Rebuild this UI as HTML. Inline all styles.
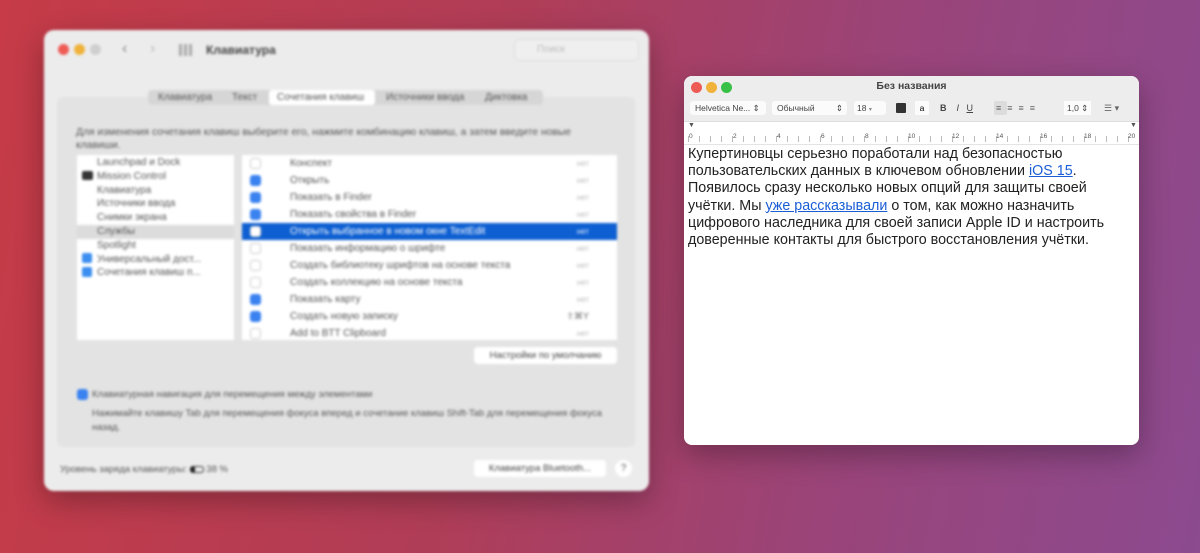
<!DOCTYPE html><html><head><meta charset="utf-8"><style>
*{margin:0;padding:0;box-sizing:border-box}
body{width:1200px;height:553px;overflow:hidden;position:relative;font-family:"Liberation Sans",sans-serif;background:linear-gradient(100deg,#c63b47 0%,#b03d57 40%,#9a4479 70%,#8c4a8f 100%)}
.a{position:absolute}
#L{left:44px;top:30px;width:605px;height:461px;background:#ececec;border-radius:10px;filter:blur(1.2px);box-shadow:0 10px 30px rgba(0,0,0,.3);color:#333;font-size:10px}
.dot{width:11px;height:11px;border-radius:50%;position:absolute}
.row{position:absolute;left:0;right:0;height:17px;font-size:10px;line-height:17px;color:#555}
.cb{position:absolute;left:8px;top:3px;width:11px;height:11px;border-radius:3px;border:1px solid #ccc;background:#fff}
.cb.on{background:#3a82f0;border-color:#3a82f0}
.net{position:absolute;right:28px;color:#bbb;font-size:8px}
#R{left:684px;top:76px;width:455px;height:369px;background:#fff;border-radius:8px;box-shadow:0 10px 30px rgba(0,0,0,.3);overflow:hidden}
a{color:#1a5ed6;text-decoration:underline}
</style></head><body>
<div id="L" class="a">
 <div class="dot" style="left:14px;top:14px;background:#ee5b55"></div>
 <div class="dot" style="left:30px;top:14px;background:#f0b23a"></div>
 <div class="dot" style="left:46px;top:14px;background:#cfcfcf"></div>
 <div class="a" style="left:78px;top:10px;font-size:16px;color:#888">‹</div>
 <div class="a" style="left:106px;top:10px;font-size:16px;color:#bbb">›</div>
 <div class="a" style="left:135px;top:14px;width:14px;height:12px;background:repeating-linear-gradient(90deg,#999 0 3px,transparent 3px 5px);opacity:.8"></div>
 <div class="a" style="left:162px;top:13px;font-size:12px;font-weight:bold;color:#444">Клавиатура</div>
 <div class="a" style="left:470px;top:9px;width:125px;height:22px;border:1px solid #ddd;border-radius:5px;background:#efefef;color:#bbb;padding:4px 0 0 22px;font-size:10px">Поиск</div>
 <div class="a" style="left:13px;top:67px;width:578px;height:350px;background:#e3e3e3;border-radius:6px"></div>
 <div class="a" style="left:104px;top:60px;width:395px;height:15px;background:#d6d6d6;border-radius:4px;font-size:10px;line-height:15px;color:#555">
  <span class="a" style="left:10px">Клавиатура</span><span class="a" style="left:84px">Текст</span>
  <span class="a" style="left:121px;width:106px;height:15px;background:#fff;border-radius:3px;padding-left:8px">Сочетания клавиш</span>
  <span class="a" style="left:238px">Источники ввода</span><span class="a" style="left:337px">Диктовка</span>
 </div>
 <div class="a" style="left:32px;top:96px;width:510px;font-size:10.3px;line-height:13px;color:#555">Для изменения сочетания клавиш выберите его, нажмите комбинацию клавиш, а затем введите новые клавиши.</div>
 <div class="a" style="left:33px;top:125px;width:157px;height:185px;background:#fff">
  <div class="a" style="left:0;top:70px;width:157px;height:14px;background:#dcdcdc"></div>
  <div class="a" style="left:20px;top:1px;line-height:13.8px;color:#555;font-size:10px">Launchpad и Dock<br>Mission Control<br>Клавиатура<br>Источники ввода<br>Снимки экрана<br>Службы<br>Spotlight<br>Универсальный дост...<br>Сочетания клавиш п...</div>
  <div class="a" style="left:5px;top:16px;width:11px;height:9px;background:#333;border-radius:2px"></div>
  <div class="a" style="left:5px;top:98px;width:10px;height:10px;background:#3b8ef0;border-radius:2px"></div>
  <div class="a" style="left:5px;top:112px;width:10px;height:10px;background:#3b8ef0;border-radius:2px"></div>
 </div>
 <div class="a" style="left:198px;top:125px;width:375px;height:185px;background:#fff;overflow:hidden">
  <div class="row" style="top:0"><div class="cb"></div><span class="a" style="left:48px">Конспект</span><span class="net">нет</span></div>
  <div class="row" style="top:17px"><div class="cb on"></div><span class="a" style="left:48px">Открыть</span><span class="net">нет</span></div>
  <div class="row" style="top:34px"><div class="cb on"></div><span class="a" style="left:48px">Показать в Finder</span><span class="net">нет</span></div>
  <div class="row" style="top:51px"><div class="cb on"></div><span class="a" style="left:48px">Показать свойства в Finder</span><span class="net">нет</span></div>
  <div class="row" style="top:68px;background:#0d5fd2;color:#fff"><div class="cb"></div><span class="a" style="left:48px">Открыть выбранное в новом окне TextEdit</span><span class="net" style="color:#dfe9ff">нет</span></div>
  <div class="row" style="top:85px"><div class="cb"></div><span class="a" style="left:48px">Показать информацию о шрифте</span><span class="net">нет</span></div>
  <div class="row" style="top:102px"><div class="cb"></div><span class="a" style="left:48px">Создать библиотеку шрифтов на основе текста</span><span class="net">нет</span></div>
  <div class="row" style="top:119px"><div class="cb"></div><span class="a" style="left:48px">Создать коллекцию на основе текста</span><span class="net">нет</span></div>
  <div class="row" style="top:136px"><div class="cb on"></div><span class="a" style="left:48px">Показать карту</span><span class="net">нет</span></div>
  <div class="row" style="top:153px"><div class="cb on"></div><span class="a" style="left:48px">Создать новую записку</span><span class="net" style="color:#666;font-size:9px">⇧⌘Y</span></div>
  <div class="row" style="top:170px"><div class="cb"></div><span class="a" style="left:48px">Add to BTT Clipboard</span><span class="net">нет</span></div>
 </div>
 <div class="a" style="left:430px;top:317px;width:143px;height:17px;background:#fff;border-radius:4px;font-size:9.5px;line-height:17px;text-align:center;color:#444">Настройки по умолчанию</div>
 <div class="a" style="left:33px;top:359px;width:11px;height:11px;background:#3a82f0;border-radius:3px"></div>
 <div class="a" style="left:48px;top:359px;font-size:9.5px;color:#555">Клавиатурная навигация для перемещения между элементами</div>
 <div class="a" style="left:48px;top:377px;width:530px;font-size:9.5px;line-height:14px;color:#555">Нажимайте клавишу Tab для перемещения фокуса вперед и сочетание клавиш Shift-Tab для перемещения фокуса назад.</div>
 <div class="a" style="left:16px;top:434px;font-size:9.5px;color:#555">Уровень заряда клавиатуры: <span style="display:inline-block;width:14px;height:7px;border:1px solid #333;border-left:5px solid #222;border-radius:3px;vertical-align:middle"></span> 38 %</div>
 <div class="a" style="left:430px;top:430px;width:132px;height:17px;background:#fff;border-radius:4px;font-size:9.5px;line-height:17px;text-align:center;color:#444">Клавиатура Bluetooth...</div>
 <div class="a" style="left:571px;top:430px;width:17px;height:17px;background:#fff;border-radius:50%;font-size:10px;line-height:17px;text-align:center;color:#555">?</div>
</div>
<div id="R" class="a">
 <div class="a" style="left:0;top:0;width:455px;height:46px;background:#ededed;border-bottom:1px solid #ddd"></div>
 <div class="dot" style="left:7px;top:6px;background:#ee5b55"></div>
 <div class="dot" style="left:22px;top:6px;background:#f0b23a"></div>
 <div class="dot" style="left:37px;top:6px;background:#38c146"></div>
 <div class="a" style="left:0;width:455px;top:4px;text-align:center;font-size:10.5px;font-weight:bold;color:#444">Без названия</div>
 <div class="a" style="left:6px;top:25px;width:76px;height:14px;background:#fbfbfb;border-radius:3px;font-size:8.5px;line-height:14px;padding-left:5px;color:#444">Helvetica Ne... ⇕</div>
 <div class="a" style="left:88px;top:25px;width:75px;height:14px;background:#fbfbfb;border-radius:3px;font-size:8.5px;line-height:14px;padding-left:5px;color:#444">Обычный<span style="float:right;margin-right:4px">⇕</span></div>
 <div class="a" style="left:170px;top:25px;width:32px;height:14px;background:#fbfbfb;border-radius:3px;font-size:8.5px;line-height:14px;padding-left:3px;color:#444">18 <span style="font-size:6px;color:#888">▾</span></div>
 <div class="a" style="left:212px;top:27px;width:10px;height:10px;background:#333;border-radius:1px"></div>
 <div class="a" style="left:231px;top:25px;width:14px;height:14px;background:#fbfbfb;font-size:8.5px;line-height:14px;text-align:center">a</div>
 <div class="a" style="left:256px;top:25px;font-size:9px;line-height:14px;color:#444"><b>B</b>&nbsp;&nbsp;&nbsp;&nbsp;<i>I</i>&nbsp;&nbsp;&nbsp;<u>U</u></div>
 <div class="a" style="left:310px;top:25px;width:13px;height:14px;background:#dcdcdc;border-radius:2px"></div>
 <div class="a" style="left:312px;top:25px;font-size:9px;line-height:14px;color:#666;letter-spacing:6px">≡≡≡≡</div>
 <div class="a" style="left:380px;top:25px;width:27px;height:14px;background:#fbfbfb;font-size:8.5px;line-height:14px;padding-left:3px;color:#444">1,0 ⇕</div>
 <div class="a" style="left:420px;top:25px;font-size:9px;line-height:14px;color:#666">☰ ▾</div>
 <div class="a" style="left:0;top:47px;width:455px;height:22px;background:#fff;border-bottom:1px solid #e4e4e4"></div>
 <div class="a" style="left:4px;top:46px;font-size:7px;color:#555">▼</div>
 <div class="a" style="left:446px;top:46px;font-size:7px;color:#555">▼</div>
 <div class="a" style="left:4px;top:60px;width:450px;height:6px;background:repeating-linear-gradient(90deg,#bbb 0 1px,transparent 1px 11px)"></div>
 <div class="a" style="left:5px;top:57px;width:450px;font-size:6.5px;color:#555">
  <span class="a" style="left:0">0</span><span class="a" style="left:44px">2</span><span class="a" style="left:88px">4</span><span class="a" style="left:132px">6</span><span class="a" style="left:176px">8</span><span class="a" style="left:219px">10</span><span class="a" style="left:263px">12</span><span class="a" style="left:307px">14</span><span class="a" style="left:351px">16</span><span class="a" style="left:395px">18</span><span class="a" style="left:439px">20</span></div>
 <div class="a" style="left:4px;top:70px;width:450px;font-size:14.3px;line-height:17.2px;color:#222">Купертиновцы серьезно поработали над безопасностью пользовательских данных в ключевом обновлении <a>iOS 15</a>. Появилось сразу несколько новых опций для защиты своей учётки. Мы <a>уже рассказывали</a> о том, как можно назначить цифрового наследника для своей записи Apple ID и настроить доверенные контакты для быстрого восстановления учётки.</div>
</div>
</body></html>
